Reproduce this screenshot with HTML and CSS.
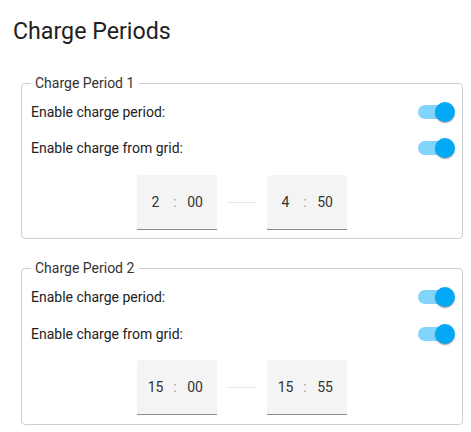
FILE: index.html
```html
<!DOCTYPE html>
<html>
<head>
<meta charset="utf-8">
<link rel="stylesheet" href="styles.css">
</head>
<body>
<div class="page">
  <h1 class="title">Charge Periods</h1>
  <fieldset class="period">
    <legend class="legend">Charge Period 1</legend>
    <div class="row"><span class="label">Enable charge period:</span><span class="switch"><span class="track"></span><span class="thumb"></span></span></div>
    <div class="row"><span class="label">Enable charge from grid:</span><span class="switch"><span class="track"></span><span class="thumb"></span></span></div>
    <div class="times">
      <div class="timebox"><span class="hh">2</span><span class="colon">:</span><span class="mm">00</span></div>
      <div class="sep"></div>
      <div class="timebox"><span class="hh">4</span><span class="colon">:</span><span class="mm">50</span></div>
    </div>
  </fieldset>
  <fieldset class="period second">
    <legend class="legend">Charge Period 2</legend>
    <div class="row"><span class="label">Enable charge period:</span><span class="switch"><span class="track"></span><span class="thumb"></span></span></div>
    <div class="row"><span class="label">Enable charge from grid:</span><span class="switch"><span class="track"></span><span class="thumb"></span></span></div>
    <div class="times">
      <div class="timebox"><span class="hh">15</span><span class="colon">:</span><span class="mm">00</span></div>
      <div class="sep"></div>
      <div class="timebox"><span class="hh">15</span><span class="colon">:</span><span class="mm">55</span></div>
    </div>
  </fieldset>
</div>
</body>
</html>
```
FILE: styles.css
```css
* { box-sizing: border-box; }
html, body { margin: 0; padding: 0; background: #fff; }
body { font-family: Roboto, "Noto Sans", sans-serif; color: #212121; }
.page { padding: 17px 9px 0 13px; width: 471px; }
.title {
  margin: 0;
  font-size: 23.2px;
  font-weight: 400;
  line-height: 28px;
  color: #212121;
}
.period {
  margin: 29px 0 0 8px;
  width: 442px;
  border: 1px solid #cfcfcf;
  border-radius: 4px;
  padding: 0 7px 8px 9px;
}
.period.second { margin-top: 20px; padding-bottom: 9px; }
.legend {
  margin-left: 0;
  padding: 0 5px 0 4px;
  font-size: 14px;
  line-height: 18px;
  color: #333;
}
.row {
  display: flex;
  align-items: center;
  justify-content: space-between;
  height: 36px;
}
.row:first-of-type { margin-top: 2px; }
.second .row + .row { margin-top: 1px; }
.label { font-size: 14px; color: #222; }
.switch {
  position: relative;
  width: 37px;
  height: 20px;
  display: block;
}
.track {
  position: absolute;
  left: 0;
  top: 3px;
  width: 34px;
  height: 14px;
  border-radius: 7px;
  background: #81d4fa;
}
.thumb {
  position: absolute;
  right: 0;
  top: 0;
  width: 20px;
  height: 20px;
  border-radius: 50%;
  background: #03a9f4;
  box-shadow: 0 2px 1px -1px rgba(0,0,0,0.2), 0 1px 1px 0 rgba(0,0,0,0.14), 0 1px 3px 0 rgba(0,0,0,0.12);
}
.times {
  display: flex;
  justify-content: center;
  align-items: center;
  margin-top: 9px;
  gap: 10px;
  padding-right: 2px;
}
.second .times { margin-top: 8px; }
.timebox {
  width: 80px;
  height: 55px;
  background: #f4f4f4;
  border-radius: 4px 4px 0 0;
  border-bottom: 1px solid #8a8a8a;
  display: flex;
  align-items: center;
  padding-left: 4px;
  font-size: 14px;
  color: #333;
}
.hh { width: 29px; text-align: center; }
.colon { width: 10px; text-align: center; color: #999; }
.mm { width: 30px; text-align: center; }
.sep { width: 30px; height: 1px; background: #e6e6e6; }
```
